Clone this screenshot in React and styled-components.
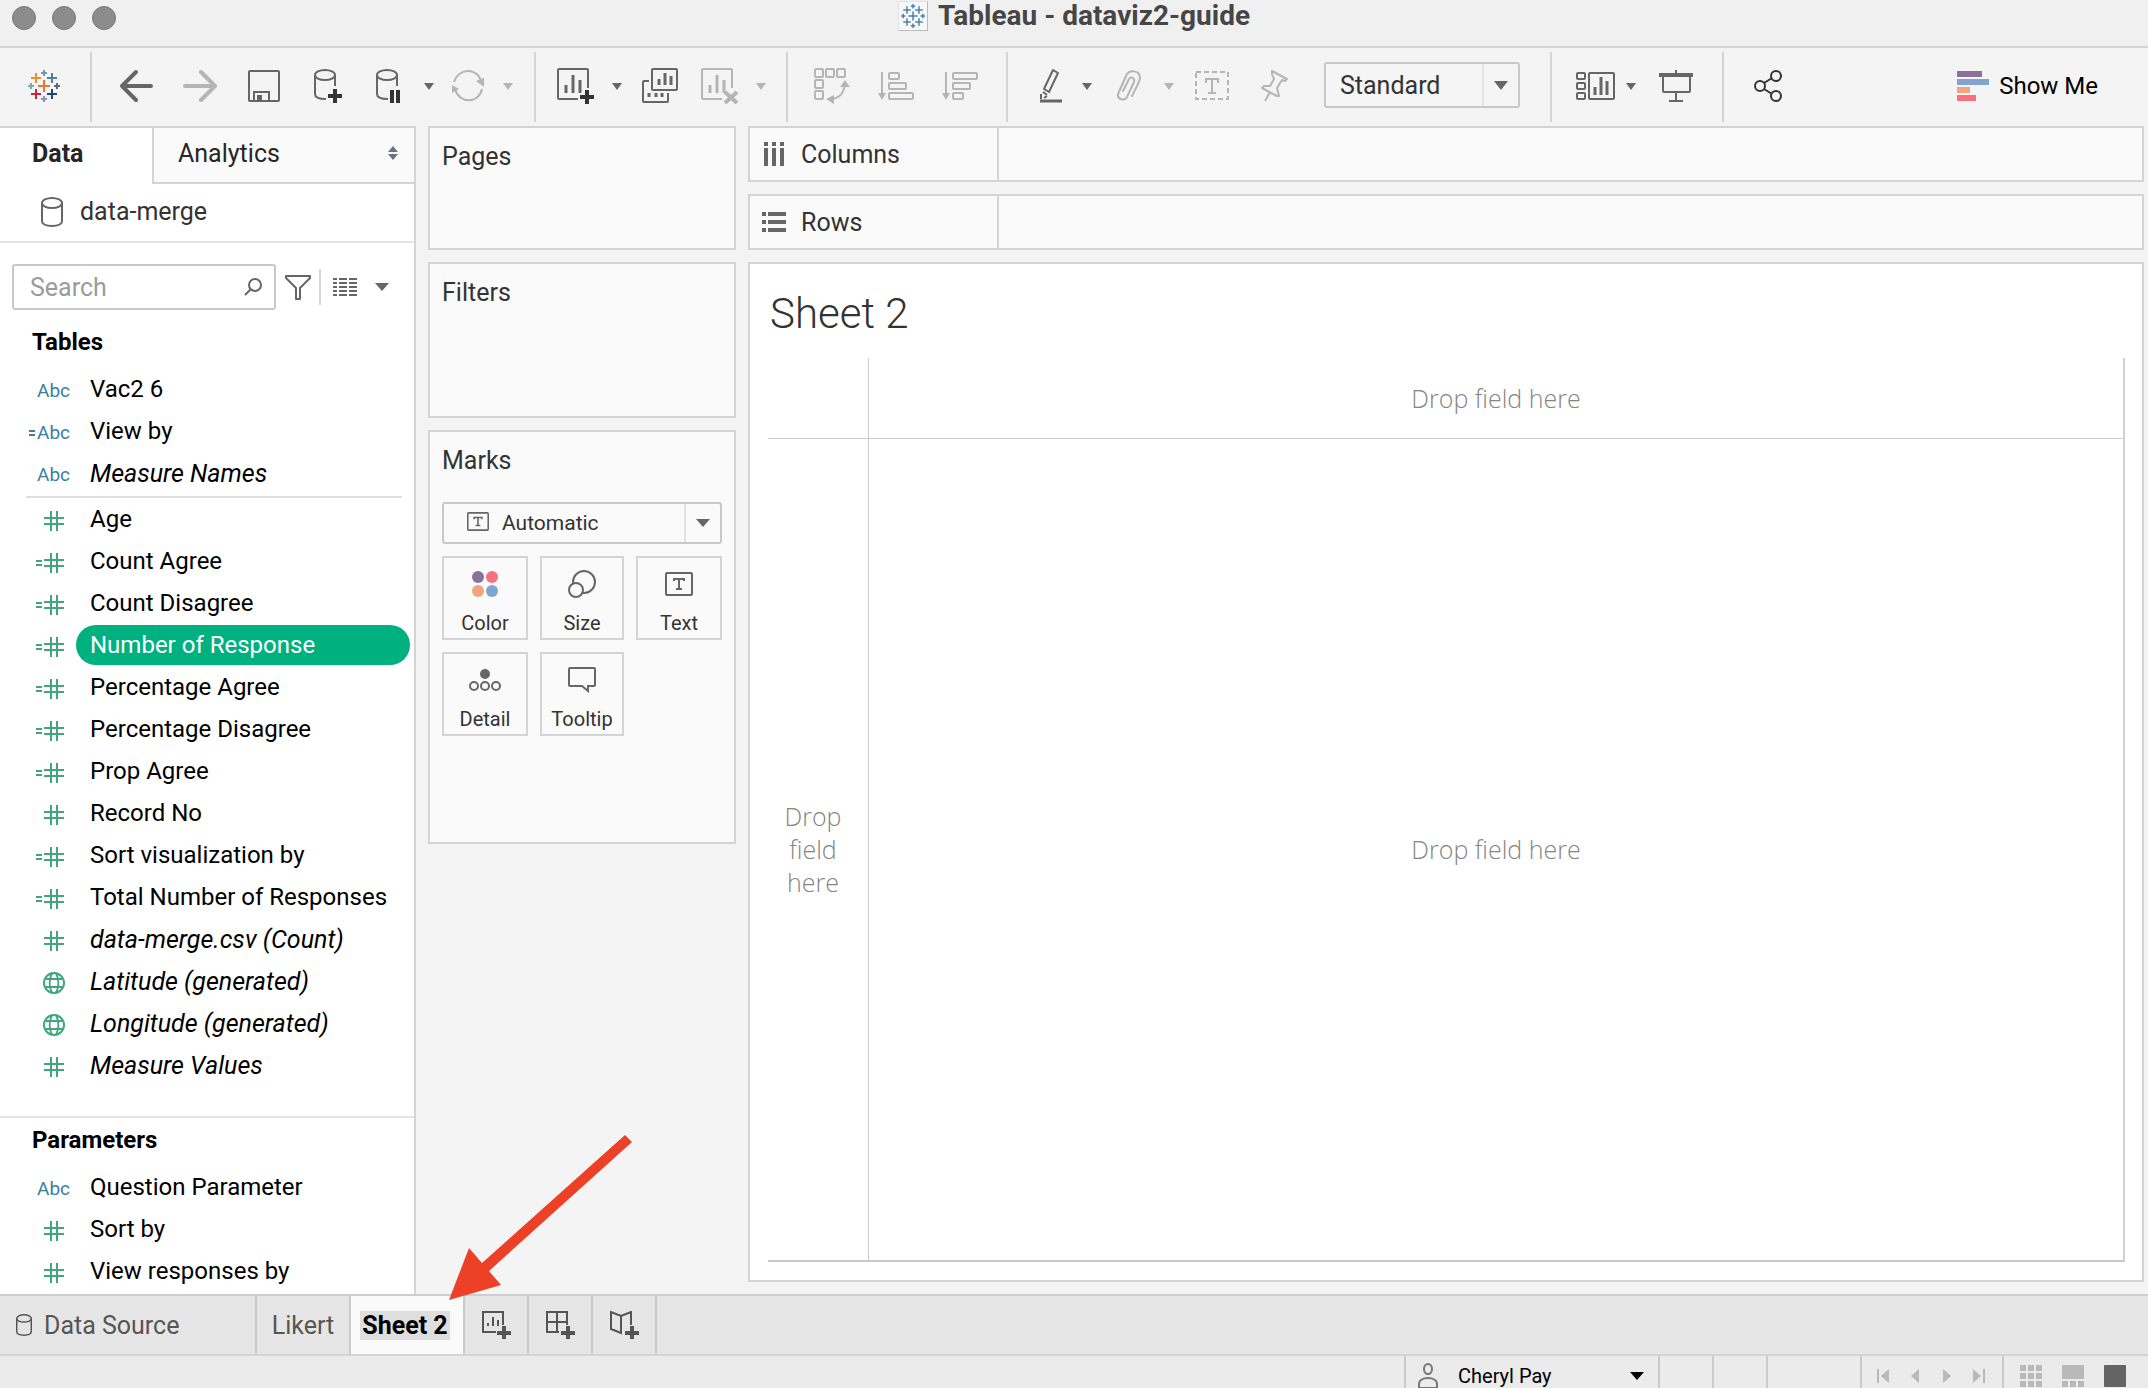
import React from "react";
import styled, { createGlobalStyle } from "styled-components";

const ink = "#666666";
const faint = "#b5b5b5";
const line = "#d4d4d4";
const green = "#41a57d";
const blue = "#3a7fa0";

const GlobalStyle = createGlobalStyle`
  *, *::before, *::after { box-sizing: border-box; }
  body { margin: 0; background: #f4f4f4; }
  body, button, input, select {
    font-family: Roboto, "Liberation Sans", sans-serif;
    font-size: 24px;
    color: #333;
  }
  button {
    margin: 0;
    padding: 0;
    border: 0;
    background: none;
    cursor: pointer;
  }
  svg { display: block; flex: none; }
  h1, h2, ul { margin: 0; padding: 0; font-size: 24px; font-weight: 400; }
  ul { list-style: none; }
`;

const Window = styled.div`
  position: relative;
  display: flex;
  flex-direction: column;
  height: 100vh;
  overflow: hidden;
`;

/* ---------- title bar ---------- */

const TitleBar = styled.header`
  display: grid;
  grid-template-columns: 1fr auto 1fr;
  flex: none;
  height: 48px;
  padding: 0 12px 14px;
  background: #f0f0f0;
  border-bottom: 2px solid #d2d2d2;
`;

const Lights = styled.div`
  display: flex;
  gap: 16px;
  padding-top: 6px;
`;

const Light = styled.button`
  width: 24px;
  height: 24px;
  border: 1px solid #777;
  border-radius: 50%;
  background: #8c8c8c;
`;

const WindowTitle = styled.h1`
  display: flex;
  align-items: center;
  gap: 10px;
  font-size: 28px;
  line-height: 32px;
  font-weight: 700;
  color: #464646;
`;

const AppBadge = styled.span`
  display: flex;
  padding: 2px;
  background: #f8f8f8;
  border: 1px solid #e2e2e2;
  border-right-color: #bbb;
  border-bottom-color: #bbb;
`;

/* ---------- toolbar ---------- */

const Toolbar = styled.div`
  display: flex;
  flex: none;
  align-items: center;
  height: 78px;
  padding-right: 50px;
`;

const ToolGroup = styled.div`
  display: flex;
  align-items: center;
  height: 70px;
  padding-left: ${(p) => p.$start}px;
  padding-right: ${(p) => p.$end}px;
  border-right: ${(p) => (p.$last ? "0" : `2px solid ${line}`)};
`;

const Tool = styled.button`
  display: flex;
  align-items: center;
  justify-content: center;
  width: ${(p) => p.$w}px;
  height: 48px;
  padding-bottom: 2px;
  color: ${(p) => (p.disabled ? faint : ink)};
`;

const SelectBox = styled.div`
  position: relative;
  flex: none;
  width: ${(p) => (p.$w ? `${p.$w}px` : "100%")};
  height: ${(p) => p.$h}px;
  margin-left: ${(p) => p.$gap || 0}px;
  margin-bottom: 4px;

  select {
    width: 100%;
    height: 100%;
    padding: 0 48px 0 ${(p) => p.$pad}px;
    border: 2px solid #c8c8c8;
    border-radius: 3px;
    background: ${(p) => p.$bg};
    font-size: ${(p) => p.$size}px;
    appearance: none;
  }
`;

const SelectCaret = styled.span`
  position: absolute;
  top: 2px;
  right: 2px;
  bottom: 2px;
  width: 36px;
  display: flex;
  align-items: center;
  justify-content: center;
  border-left: 2px solid #e2e2e2;
  color: ${ink};
  pointer-events: none;
`;

const SelectIcon = styled.span`
  position: absolute;
  top: 10px;
  left: 25px;
  color: ${ink};
  pointer-events: none;
`;

const ShowMe = styled.button`
  display: flex;
  align-items: center;
  gap: 10px;
  margin-left: auto;
  padding-bottom: 2px;
  color: #000;
`;

/* ---------- body ---------- */

const Body = styled.main`
  display: flex;
  flex: 1;
  min-height: 0;
`;

const Sidebar = styled.aside`
  display: flex;
  flex-direction: column;
  flex: none;
  width: 416px;
  background: #fff;
  border-top: 2px solid ${line};
  border-right: 2px solid ${line};
`;

const PaneTabs = styled.div`
  display: flex;
  flex: none;
  height: 56px;
`;

const PaneTab = styled.button`
  display: flex;
  align-items: center;
  justify-content: space-between;
  width: ${(p) => (p.$active ? "152px" : "auto")};
  flex: ${(p) => (p.$active ? "none" : "1")};
  padding: ${(p) => (p.$active ? "0 0 6px 32px" : "0 16px 4px 24px")};
  background: ${(p) => (p.$active ? "#fff" : "#fafafa")};
  border-left: ${(p) => (p.$active ? "0" : `2px solid ${line}`)};
  border-bottom: ${(p) => (p.$active ? "0" : `2px solid ${line}`)};
  font-size: 25px;
  font-weight: ${(p) => (p.$active ? 700 : 400)};
  color: #262626;
`;

const Source = styled.button`
  display: flex;
  align-items: center;
  flex: none;
  gap: 17px;
  height: 59px;
  padding-left: 41px;
  padding-bottom: 2px;
  border-bottom: 2px solid #e4e4e4;
  font-size: 25px;
  color: #333;

  svg { color: ${ink}; }
`;

const SearchRow = styled.div`
  display: flex;
  align-items: center;
  flex: none;
  height: 46px;
  margin: 21px 12px 0 12px;
`;

const SearchField = styled.label`
  position: relative;
  flex: none;
  width: 264px;
  height: 46px;

  input {
    width: 100%;
    height: 100%;
    padding: 0 48px 0 16px;
    border: 2px solid #c8c8c8;
    border-radius: 3px;
    outline: 0;
    font-size: 25px;
  }
  input::placeholder { color: #9b9b9b; opacity: 1; }
  svg { position: absolute; right: 14px; top: 14px; color: ${ink}; }
`;

const SmallTool = styled.button`
  display: flex;
  align-items: center;
  justify-content: center;
  flex: none;
  width: ${(p) => p.$w}px;
  height: 36px;
  color: ${ink};
  border-right: ${(p) => (p.$ruled ? `2px solid ${line}` : "0")};
`;

const GroupTitle = styled.h2`
  flex: none;
  padding-left: 32px;
  font-weight: 700;
  color: #000;
  line-height: 32px;
  margin: ${(p) => p.$margin};
`;

const FieldList = styled.ul`
  flex: none;
  margin-left: 26px;
  margin-right: 12px;
  padding-bottom: ${(p) => (p.$ruled ? "2px" : "0")};
  border-bottom: ${(p) => (p.$ruled ? "2px solid #e0e0e0" : "0")};
`;

const Field = styled.li`
  display: flex;
  align-items: center;
  height: 42px;
`;

const FieldType = styled.span`
  display: flex;
  align-items: center;
  justify-content: flex-end;
  width: 44px;
  padding-top: 4px;
  padding-right: ${(p) => p.$inset}px;
  gap: 1px;
  font-size: 19px;
  line-height: 24px;
  color: ${blue};
`;

const FieldName = styled.button`
  flex: 1;
  height: 40px;
  margin-left: 6px;
  margin-right: -8px;
  padding: 0 14px;
  border-radius: 20px;
  text-align: left;
  white-space: nowrap;
  font-size: ${(p) => (p.$italic ? 25 : 24)}px;
  font-style: ${(p) => (p.$italic ? "italic" : "normal")};
  color: ${(p) => (p.$selected ? "#fff" : "#000")};
  background: ${(p) => (p.$selected ? "#00b180" : "none")};
`;

const Parameters = styled.section`
  flex: 1;
  min-height: 0;
  margin-top: 30px;
  border-top: 2px solid #e4e4e4;
`;

/* ---------- cards ---------- */

const Cards = styled.section`
  display: flex;
  flex-direction: column;
  flex: none;
  gap: 12px;
  width: 308px;
  margin-left: 12px;
`;

const Card = styled.section`
  height: ${(p) => p.$h}px;
  padding: 12px;
  border: 2px solid ${line};
  background: #fafafa;

  h2 {
    margin-bottom: 24px;
    font-size: 25px;
    line-height: 34px;
  }
`;

const MarkGrid = styled.div`
  display: grid;
  grid-template-columns: 86px 84px 86px;
  gap: 12px;
  margin-top: 12px;
`;

const MarkButton = styled.button`
  display: flex;
  flex-direction: column;
  align-items: center;
  height: 84px;
  padding-top: 9px;
  border: 2px solid ${line};
  background: #fafafa;
  font-size: 20px;
  line-height: 24px;
  color: #333;
`;

const MarkIcon = styled.span`
  display: flex;
  align-items: center;
  justify-content: center;
  height: 34px;
  margin-bottom: 10px;
  color: ${ink};
`;

/* ---------- shelves and canvas ---------- */

const Work = styled.section`
  display: flex;
  flex-direction: column;
  flex: 1;
  gap: 12px;
  min-width: 0;
  padding: 0 4px 12px 12px;
`;

const Shelf = styled.div`
  display: flex;
  flex: none;
  height: 56px;
  border: 2px solid ${line};
  background: #fafafa;
`;

const ShelfLabel = styled.h2`
  display: flex;
  align-items: center;
  gap: 15px;
  width: 249px;
  padding-left: 12px;
  border-right: 2px solid ${line};
  font-size: 25px;

  svg { color: ${ink}; }
`;

const Sheet = styled.article`
  display: flex;
  flex-direction: column;
  flex: 1;
  min-height: 0;
  padding: 0 17px 18px 18px;
  border: 2px solid ${line};
  background: #fff;
`;

const SheetTitle = styled.h2`
  flex: none;
  height: 94px;
  padding-left: 2px;
  font-size: 42px;
  line-height: 100px;
  font-weight: 300;
`;

const DropGrid = styled.div`
  display: grid;
  flex: 1;
  grid-template-columns: 101px 1fr;
  grid-template-rows: 81px 1fr;
  border-right: 2px solid #d0d0d0;
  border-bottom: 2px solid #c8c8c8;
`;

const DropCell = styled.div`
  display: flex;
  align-items: center;
  justify-content: center;
  padding: ${(p) => (p.$narrow ? "0 22px 0 12px" : "0")};
  border-right: ${(p) => (p.$right ? "1px solid #ccc" : "0")};
  border-bottom: ${(p) => (p.$bottom ? "1px solid #ccc" : "0")};
  font-family: "Open Sans", "Noto Sans", sans-serif;
  font-size: 25px;
  line-height: 33px;
  font-weight: 300;
  text-align: center;
  color: #858585;
`;

/* ---------- sheet tabs and status bar ---------- */

const SheetTabs = styled.nav`
  display: flex;
  flex: none;
  height: 62px;
  border-top: 2px solid #cdcdcd;
  border-bottom: 2px solid ${line};
  background: #e6e6e6;
`;

const SheetTab = styled.button`
  display: flex;
  align-items: center;
  justify-content: ${(p) => (p.$left ? "flex-start" : "center")};
  gap: 12px;
  width: ${(p) => p.$w}px;
  padding-left: ${(p) => (p.$left ? 16 : 0)}px;
  border-right: 2px solid #cacaca;
  background: ${(p) => (p.$active ? "#fafafa" : "none")};
  font-size: 25px;
  color: ${(p) => (p.$active ? "#000" : "#555")};
  font-weight: ${(p) => (p.$active ? 700 : 400)};
`;

const Selection = styled.span`
  margin-right: 4px;
  padding: 0 2px;
  line-height: 29px;
  background: #dedede;
`;

const StatusBar = styled.footer`
  display: flex;
  justify-content: flex-end;
  flex: none;
  height: 32px;
  overflow: hidden;
  background: #ebebeb;
`;

const StatusCell = styled.div`
  position: relative;
  display: flex;
  align-items: center;
  width: ${(p) => p.$w}px;
  height: 40px;
  gap: ${(p) => p.$gap || 0}px;
  padding-left: ${(p) => p.$pad || 0}px;
  border-left: 2px solid #cacaca;
  color: #777;

  button { color: #b9b9b9; }

  select {
    width: 196px;
    padding: 0;
    border: 0;
    background: none;
    appearance: none;
    font-size: 20px;
    color: #000;
  }
`;

const UserCaret = styled.span`
  position: absolute;
  right: 14px;
  color: #000;
  pointer-events: none;
`;

const Pointer = styled.svg`
  position: absolute;
  left: 448px;
  bottom: 86px;
  pointer-events: none;
`;

/* ---------- icons ---------- */

const Svg = ({ w, h, children, ...rest }) => (
  <svg
    width={w}
    height={h}
    viewBox={`0 0 ${w} ${h}`}
    fill="none"
    stroke="currentColor"
    strokeWidth="2"
    aria-hidden="true"
    {...rest}
  >
    {children}
  </svg>
);

const Caret = ({ w = 10, h = 7 }) => (
  <Svg w={w} h={h} stroke="none" fill="currentColor">
    <path d={`M0 0H${w}L${w / 2} ${h}Z`} />
  </Svg>
);

const crosses = [
  [16, 16, 6, "#e8762c"],
  [8, 8, 5, "#e8912d"],
  [24, 8, 5, "#4e8296"],
  [8, 24, 5, "#c9253c"],
  [24, 24, 5, "#1f447b"],
  [16, 3, 3, "#7199a6"],
  [16, 29, 3, "#8a93b5"],
  [3, 16, 3, "#7fa8b3"],
  [29, 16, 3, "#5b6591"],
];

const Crosses = ({ size, mono }) => (
  <Svg w={size} h={size} viewBox="0 0 32 32">
    {crosses.map(([x, y, r, c]) => (
      <path key={`${x}-${y}`} stroke={mono || c} d={`M${x - r} ${y}h${r * 2}M${x} ${y - r}v${r * 2}`} />
    ))}
  </Svg>
);

const Back = () => (
  <Svg w={34} h={34} strokeWidth="4">
    <path d="M17 3L3 17L17 31M3 17H32" strokeLinejoin="round" strokeLinecap="round" />
  </Svg>
);

const Forward = () => (
  <Svg w={34} h={34} strokeWidth="4">
    <path d="M18 3L32 17L18 31M31 17H2" strokeLinejoin="round" strokeLinecap="round" />
  </Svg>
);

const Save = () => (
  <Svg w={32} h={32}>
    <rect x="1" y="1" width="30" height="30" rx="1" />
    <path d="M6 31V22H21V31" />
    <path d="M9 25h5v5h-5z" fill="currentColor" stroke="none" />
  </Svg>
);

const drum = (
  <>
    <ellipse cx="11" cy="6" rx="10" ry="5" />
    <path d="M1 6V25C1 28 5 30 12 30M21 6V17" />
  </>
);

const DrumPlus = () => (
  <Svg w={28} h={34}>
    {drum}
    <path d="M21 20V34M14 27H28" stroke="#333" strokeWidth="4" />
  </Svg>
);

const DrumPause = () => (
  <Svg w={24} h={34}>
    {drum}
    <path d="M16 21V34M22 21V34" stroke="#333" strokeWidth="4" />
  </Svg>
);

const Drum = ({ w = 22, h = 30 }) => (
  <Svg w={w} h={h} viewBox="0 0 22 30">
    <ellipse cx="11" cy="6" rx="10" ry="5" />
    <path d="M1 6V24C1 27 5 29 11 29S21 27 21 24V6" />
  </Svg>
);

const Refresh = () => (
  <Svg w={34} h={32}>
    <path d="M3 12C7 -2 26 -3 30 11M31 19C28 34 8 34 4 19" />
    <path d="M25 11L33 8V17ZM1 15L8 19L1 23Z" fill="currentColor" stroke="none" />
  </Svg>
);

const NewSheet = ({ cross }) => (
  <Svg w={38} h={36}>
    <path d="M21 31H2A1 1 0 0 1 1 30V2A1 1 0 0 1 2 1H30A1 1 0 0 1 31 2V20" />
    <path d="M9 17V25M16 7V25M23 12V25" strokeWidth="3" />
    {cross ? (
      <path d="M24 24L36 35M36 24L24 35" strokeWidth="4" />
    ) : (
      <path d="M30 22V36M23 29H37" stroke="#333" strokeWidth="4" />
    )}
  </Svg>
);

const Duplicate = () => (
  <Svg w={36} h={36}>
    <rect x="10" y="1" width="25" height="21" rx="1" />
    <path d="M17 11V17M23 5V17M29 8V17" strokeWidth="3" />
    <path d="M7 13H2A1 1 0 0 0 1 14V33A1 1 0 0 0 2 34H25A1 1 0 0 0 26 33V25" />
    <path d="M7 25V29M14 25V29M20 25V29" strokeWidth="3" />
  </Svg>
);

const Swap = () => (
  <Svg w={36} h={36}>
    {[[1, 1], [12, 1], [23, 1], [1, 12], [1, 23]].map(([x, y]) => (
      <rect key={`${x}-${y}`} x={x} y={y} width="8" height="8" rx="1" />
    ))}
    <path d="M31 16C30 24 26 30 18 31" strokeWidth="2" />
    <path d="M26 19L31 12L36 19ZM20 27L12 31L20 36Z" fill="currentColor" stroke="none" />
  </Svg>
);

const Sort = ({ descending }) => {
  const widths = descending ? [24, 17, 10] : [10, 17, 24];
  return (
    <Svg w={36} h={30}>
      <path d="M4 1V24" />
      <path d="M0 22H8L4 29Z" fill="currentColor" stroke="none" />
      {widths.map((w, i) => (
        <rect key={w} x="11" y={2 + i * 10} width={w} height="6" rx="1" />
      ))}
    </Svg>
  );
};

const Highlighter = () => (
  <Svg w={24} h={34}>
    <path d="M13 1L18 4L9 23L4 20Z" strokeLinejoin="round" />
    <path d="M3 23L7 26M1 30V25M4 29L7 27" />
    <path d="M0 32H22" strokeWidth="3" />
  </Svg>
);

const Clip = () => (
  <Svg w={26} h={32}>
    <path
      d="M7 21L13 9C15 6 19 8 18 12L11 27C9 31 1 30 2 24L10 6C13 -1 24 0 24 8C24 11 20 18 16 26"
      strokeLinecap="round"
    />
  </Svg>
);

const TextFrame = () => (
  <Svg w={34} h={30}>
    <rect x="1" y="1" width="32" height="27" strokeDasharray="5 3" />
    <path d="M11 12V8H23V12M17 8V22M13 22H21" />
  </Svg>
);

const Pin = () => (
  <Svg w={28} h={32}>
    <path
      d="M11 1L26 9L24 11L21 10L16 18L18 26L16 26L1 18L3 16L9 16L13 9L11 4ZM9 22L4 31"
      strokeLinejoin="round"
    />
  </Svg>
);

const CardsIcon = () => (
  <Svg w={40} h={28}>
    {[1, 11, 21].map((y) => (
      <rect key={y} x="1" y={y} width="8" height="6" rx="1" />
    ))}
    <rect x="13" y="1" width="25" height="26" rx="1" />
    <path d="M19 15V23M25 5V23M31 9V23" strokeWidth="3" />
  </Svg>
);

const Present = () => (
  <Svg w={34} h={32}>
    <path d="M0 5H34" strokeWidth="4" />
    <path d="M4 6V21A1 1 0 0 0 5 22H30A1 1 0 0 0 31 21V6M17 0V4M17 22V31M10 31H24" />
  </Svg>
);

const Share = () => (
  <Svg w={28} h={32} stroke="#333">
    <circle cx="6" cy="16" r="5" />
    <circle cx="22" cy="6" r="5" />
    <circle cx="22" cy="26" r="5" />
    <path d="M10 13L18 8M10 19L18 24" />
  </Svg>
);

const Bars = () => (
  <Svg w={32} h={30} stroke="none">
    <path d="M0 0h25v6H0z" fill="#88719a" />
    <path d="M0 8h32v6H0z" fill="#82a3cd" />
    <path d="M0 16h13v6H0z" fill="#f2a57c" />
    <path d="M0 24h19v6H0z" fill="#fa7080" />
  </Svg>
);

const Stepper = () => (
  <Svg w={10} h={16} stroke="none" fill="#66727f">
    <path d="M0 7L5 1L10 7ZM0 9H10L5 15Z" />
  </Svg>
);

const Magnifier = () => (
  <Svg w={18} h={18}>
    <circle cx="11" cy="7" r="6" />
    <path d="M7 11L1 17" />
  </Svg>
);

const Funnel = () => (
  <Svg w={26} h={25}>
    <path d="M1 1H25V3L15 13V24H11V13L1 3Z" strokeLinejoin="round" />
  </Svg>
);

const Listing = () => (
  <Svg w={24} h={18}>
    {[1, 5, 9, 13, 17].map((y) => (
      <path key={y} d={`M0 ${y}H4M6 ${y}H14M16 ${y}H24`} />
    ))}
  </Svg>
);

const Hash = () => (
  <Svg w={20} h={20} stroke={green}>
    <path d="M7 0V20M13 0V20M0 7H20M0 13H20" />
  </Svg>
);

const Equals = ({ tone }) => (
  <Svg w={7} h={8} stroke={tone}>
    <path d="M0 2H6M0 6H6" />
  </Svg>
);

const Globe = () => (
  <Svg w={22} h={22} stroke={green}>
    <circle cx="11" cy="11" r="10" />
    <path d="M3 7H19M3 15H19M9 1C6 7 6 15 9 21M13 1C16 7 16 15 13 21" />
  </Svg>
);

const TextMark = ({ w = 28, h = 24 }) => (
  <Svg w={w} h={h} viewBox="0 0 28 24">
    <rect x="1" y="1" width="26" height="22" rx="1" />
    <path d="M9 9V7H19V9M14 7V17M11 17H17" />
  </Svg>
);

const ColorMark = () => (
  <Svg w={26} h={26} stroke="none">
    <circle cx="6" cy="6" r="6" fill="#88719a" />
    <circle cx="20" cy="6" r="6" fill="#fa7080" />
    <circle cx="6" cy="20" r="6" fill="#f2a57c" />
    <circle cx="20" cy="20" r="6" fill="#82a3cd" />
  </Svg>
);

const SizeMark = () => (
  <Svg w={28} h={28}>
    <circle cx="16" cy="12" r="11" />
    <circle cx="8" cy="20" r="7" fill="#fafafa" />
  </Svg>
);

const DetailMark = () => (
  <Svg w={32} h={22}>
    <circle cx="16" cy="5" r="5" fill="currentColor" stroke="none" />
    <circle cx="5" cy="17" r="4" />
    <circle cx="16" cy="17" r="4" />
    <circle cx="27" cy="17" r="4" />
  </Svg>
);

const TooltipMark = () => (
  <Svg w={28} h={26}>
    <path d="M2 1H26A1 1 0 0 1 27 2V18A1 1 0 0 1 26 19H20V24L14 19H2A1 1 0 0 1 1 18V2A1 1 0 0 1 2 1Z" />
  </Svg>
);

const ColumnsIcon = () => (
  <Svg w={24} h={24} strokeWidth="4">
    <path d="M4 0V4M12 0V4M20 0V4M4 6V24M12 6V24M20 6V24" />
  </Svg>
);

const RowsIcon = () => (
  <Svg w={24} h={20} strokeWidth="4">
    <path d="M0 2H4M0 10H4M0 18H4M6 2H24M6 10H24M6 18H24" />
  </Svg>
);

const AddSheet = ({ kind }) => (
  <Svg w={29} h={28}>
    {kind === "sheet" && (
      <>
        <path d="M14 21H1V1H21V14" />
        <path d="M6 12V15M11 6V15M16 9V15" />
      </>
    )}
    {kind === "dashboard" && <path d="M13 21H1V1H21V14M1 11H21M11 1V21" />}
    {kind === "story" && <path d="M21 14V1L11 5L1 1V18L11 22V5" />}
    <path d="M22 15V28M15 22H29" strokeWidth="4" />
  </Svg>
);

const User = () => (
  <Svg w={20} h={26}>
    <ellipse cx="10" cy="6" rx="4" ry="5" />
    <path d="M1 25V21C1 13 19 13 19 21V25Z" />
  </Svg>
);

const Step = ({ flip, end }) => (
  <Svg w={12} h={14} stroke="none" fill="currentColor" transform={flip ? "scale(-1 1)" : undefined}>
    <path d={end ? "M12 0V14L4 7ZM0 0h2v14H0z" : "M10 0V14L2 7Z"} />
  </Svg>
);

const ViewGrid = () => (
  <Svg w={22} h={22} stroke="none" fill="currentColor">
    {[0, 8, 16].map((y) => (
      <path key={y} d={`M0 ${y}h6v6h-6zM8 ${y}h6v6h-6zM16 ${y}h6v6h-6z`} />
    ))}
  </Svg>
);

const ViewStrip = () => (
  <Svg w={22} h={22} stroke="none" fill="currentColor">
    <path d="M0 0h22v14H0zM0 16h6v6h-6zM8 16h6v6h-6zM16 16h6v6h-6z" />
  </Svg>
);

const ViewFull = () => (
  <Svg w={22} h={22} stroke="none" fill="#646464">
    <rect width="22" height="22" rx="1" />
  </Svg>
);

/* ---------- data ---------- */

const dimensions = [
  { name: "Vac2 6", type: "text" },
  { name: "View by", type: "text", calc: true },
  { name: "Measure Names", type: "text", italic: true },
];

const measures = [
  { name: "Age", type: "number" },
  { name: "Count Agree", type: "number", calc: true },
  { name: "Count Disagree", type: "number", calc: true },
  { name: "Number of Response", type: "number", calc: true, selected: true },
  { name: "Percentage Agree", type: "number", calc: true },
  { name: "Percentage Disagree", type: "number", calc: true },
  { name: "Prop Agree", type: "number", calc: true },
  { name: "Record No", type: "number" },
  { name: "Sort visualization by", type: "number", calc: true },
  { name: "Total Number of Responses", type: "number", calc: true },
  { name: "data-merge.csv (Count)", type: "number", italic: true },
  { name: "Latitude (generated)", type: "geo", italic: true },
  { name: "Longitude (generated)", type: "geo", italic: true },
  { name: "Measure Values", type: "number", italic: true },
];

const parameters = [
  { name: "Question Parameter", type: "text" },
  { name: "Sort by", type: "number" },
  { name: "View responses by", type: "number" },
];

const insets = { text: 0, number: 6, geo: 5 };

const Fields = ({ items, ruled }) => (
  <FieldList $ruled={ruled}>
    {items.map((f) => (
      <Field key={f.name}>
        <FieldType $inset={insets[f.type]}>
          {f.calc && <Equals tone={f.type === "text" ? blue : green} />}
          {f.type === "text" && "Abc"}
          {f.type === "number" && <Hash />}
          {f.type === "geo" && <Globe />}
        </FieldType>
        <FieldName $italic={f.italic} $selected={f.selected}>
          {f.name}
        </FieldName>
      </Field>
    ))}
  </FieldList>
);

const T = ({ w, label, off, children }) => (
  <Tool $w={w} aria-label={label} disabled={off}>
    {children}
  </Tool>
);

const marks = [
  ["Color", ColorMark],
  ["Size", SizeMark],
  ["Text", TextMark],
  ["Detail", DetailMark],
  ["Tooltip", TooltipMark],
];

export default function App() {
  return (
    <Window>
      <GlobalStyle />
      <TitleBar>
        <Lights>
          <Light aria-label="Close" />
          <Light aria-label="Minimize" />
          <Light aria-label="Zoom" />
        </Lights>
        <WindowTitle>
          <AppBadge>
            <Crosses size={24} mono="#4a82b0" />
          </AppBadge>
          Tableau - dataviz2-guide
        </WindowTitle>
      </TitleBar>

      <Toolbar>
        <ToolGroup $start={12} $end={14}>
          <T w={64} label="Start page"><Crosses size={32} /></T>
        </ToolGroup>
        <ToolGroup $start={12} $end={12}>
          <T w={64} label="Back"><Back /></T>
          <T w={64} label="Forward" off><Forward /></T>
          <T w={64} label="Save"><Save /></T>
          <T w={64} label="New data source"><DrumPlus /></T>
          <T w={56} label="Pause auto updates"><DrumPause /></T>
          <T w={26} label="Update options"><Caret /></T>
          <T w={52} label="Refresh" off><Refresh /></T>
          <T w={28} label="Refresh options" off><Caret /></T>
        </ToolGroup>
        <ToolGroup $start={12} $end={14}>
          <T w={56} label="New worksheet"><NewSheet /></T>
          <T w={26} label="New worksheet options"><Caret /></T>
          <T w={60} label="Duplicate"><Duplicate /></T>
          <T w={60} label="Clear sheet" off><NewSheet cross /></T>
          <T w={22} label="Clear options" off><Caret /></T>
        </ToolGroup>
        <ToolGroup $start={12} $end={14}>
          <T w={64} label="Swap rows and columns" off><Swap /></T>
          <T w={64} label="Sort ascending" off><Sort /></T>
          <T w={64} label="Sort descending" off><Sort descending /></T>
        </ToolGroup>
        <ToolGroup $start={19} $end={30}>
          <T w={50} label="Highlight"><Highlighter /></T>
          <T w={20} label="Highlight options"><Caret /></T>
          <T w={64} label="Group members" off><Clip /></T>
          <T w={16} label="Group options" off><Caret /></T>
          <T w={70} label="Show mark labels" off><TextFrame /></T>
          <T w={56} label="Fix axes" off><Pin /></T>
          <SelectBox $w={196} $h={46} $gap={21} $pad={14} $size={25} $bg="#f5f5f5">
            <select aria-label="Fit" defaultValue="Standard">
              <option>Standard</option>
            </select>
            <SelectCaret><Caret w={14} h={9} /></SelectCaret>
          </SelectBox>
        </ToolGroup>
        <ToolGroup $start={19} $end={11}>
          <T w={50} label="Show or hide cards"><CardsIcon /></T>
          <T w={20} label="Card options"><Caret /></T>
          <T w={70} label="Presentation mode"><Present /></T>
        </ToolGroup>
        <ToolGroup $start={12} $end={0} $last>
          <T w={64} label="Share"><Share /></T>
        </ToolGroup>
        <ShowMe>
          <Bars />
          Show Me
        </ShowMe>
      </Toolbar>

      <Body>
        <Sidebar>
          <PaneTabs>
            <PaneTab $active>Data</PaneTab>
            <PaneTab>
              Analytics
              <Stepper />
            </PaneTab>
          </PaneTabs>
          <Source>
            <Drum />
            data-merge
          </Source>
          <SearchRow>
            <SearchField>
              <input type="text" placeholder="Search" aria-label="Search" />
              <Magnifier />
            </SearchField>
            <SmallTool $w={45} $ruled aria-label="Filter fields"><Funnel /></SmallTool>
            <SmallTool $w={47} aria-label="View as list"><Listing /></SmallTool>
            <SmallTool $w={28} aria-label="View options"><Caret w={14} h={8} /></SmallTool>
          </SearchRow>
          <GroupTitle $margin="16px 0 10px">Tables</GroupTitle>
          <Fields items={dimensions} ruled />
          <Fields items={measures} />
          <Parameters>
            <GroupTitle $margin="6px 0 10px">Parameters</GroupTitle>
            <Fields items={parameters} />
          </Parameters>
        </Sidebar>

        <Cards>
          <Card $h={124}><h2>Pages</h2></Card>
          <Card $h={156}><h2>Filters</h2></Card>
          <Card $h={414}>
            <h2>Marks</h2>
            <SelectBox $h={42} $pad={58} $size={21} $bg="#fafafa">
              <SelectIcon><TextMark w={22} h={19} /></SelectIcon>
              <select aria-label="Mark type" defaultValue="Automatic">
                <option>Automatic</option>
              </select>
              <SelectCaret><Caret w={14} h={8} /></SelectCaret>
            </SelectBox>
            <MarkGrid>
              {marks.map(([name, Icon]) => (
                <MarkButton key={name}>
                  <MarkIcon><Icon /></MarkIcon>
                  {name}
                </MarkButton>
              ))}
            </MarkGrid>
          </Card>
        </Cards>

        <Work>
          <Shelf>
            <ShelfLabel><ColumnsIcon />Columns</ShelfLabel>
          </Shelf>
          <Shelf>
            <ShelfLabel><RowsIcon />Rows</ShelfLabel>
          </Shelf>
          <Sheet>
            <SheetTitle>Sheet 2</SheetTitle>
            <DropGrid>
              <DropCell $right $bottom />
              <DropCell $bottom>Drop field here</DropCell>
              <DropCell $right $narrow>Drop field here</DropCell>
              <DropCell>Drop field here</DropCell>
            </DropGrid>
          </Sheet>
        </Work>
      </Body>

      <SheetTabs>
        <SheetTab $w={257} $left><Drum w={16} h={22} />Data Source</SheetTab>
        <SheetTab $w={94}>Likert</SheetTab>
        <SheetTab $w={114} $active><Selection>Sheet 2</Selection></SheetTab>
        <SheetTab $w={64} aria-label="New worksheet"><AddSheet kind="sheet" /></SheetTab>
        <SheetTab $w={64} aria-label="New dashboard"><AddSheet kind="dashboard" /></SheetTab>
        <SheetTab $w={64} aria-label="New story"><AddSheet kind="story" /></SheetTab>
      </SheetTabs>

      <StatusBar>
        <StatusCell $w={254} $pad={12} $gap={20}>
          <User />
          <select aria-label="Signed-in user" defaultValue="Cheryl Pay">
            <option>Cheryl Pay</option>
          </select>
          <UserCaret><Caret w={14} h={8} /></UserCaret>
        </StatusCell>
        <StatusCell $w={54} />
        <StatusCell $w={54} />
        <StatusCell $w={94} />
        <StatusCell $w={142} $pad={15} $gap={20}>
          <button aria-label="First sheet"><Step end /></button>
          <button aria-label="Previous sheet"><Step /></button>
          <button aria-label="Next sheet"><Step flip /></button>
          <button aria-label="Last sheet"><Step end flip /></button>
        </StatusCell>
        <StatusCell $w={146} $pad={16} $gap={20}>
          <button aria-label="Sheet sorter"><ViewGrid /></button>
          <button aria-label="Filmstrip"><ViewStrip /></button>
          <button aria-label="Tabs"><ViewFull /></button>
        </StatusCell>
      </StatusBar>

      <Pointer width="186" height="168" viewBox="0 0 186 168" aria-hidden="true">
        <path d="M177 1L184 8L41 137L53 151L1 166L21 114L34 129Z" fill="#ec4126" />
      </Pointer>
    </Window>
  );
}
